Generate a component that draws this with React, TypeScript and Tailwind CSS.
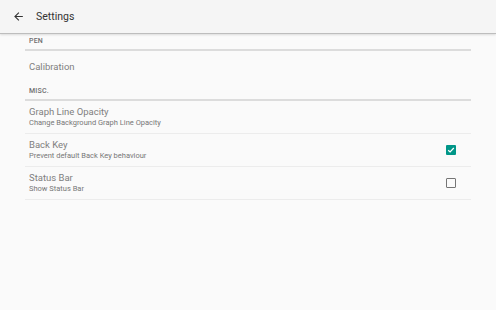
import React from "react";

function Item({ title, sub, check }: { title: string; sub?: string; check?: "on" | "off" }) {
  return (
    <div className="flex items-center h-[33px] border-b border-[#ececec] pl-[4px] pr-[15px]">
      <div className="flex-1 flex flex-col">
        <div className="text-[9.5px] leading-[12px] text-[#808080]">{title}</div>
        {sub && <div className="text-[7.5px] leading-[10px] text-[#777]">{sub}</div>}
      </div>
      {check === "on" && (
        <div className="w-[10px] h-[10px] rounded-[1px] bg-[#009688] flex items-center justify-center">
          <svg width="8" height="8" viewBox="0 0 8 8">
            <path d="M1.2 4.2 L3.1 6 L6.8 2" stroke="white" strokeWidth="1.2" fill="none" />
          </svg>
        </div>
      )}
      {check === "off" && (
        <div className="w-[10px] h-[10px] rounded-[1px] border-[1.5px] border-[#757575]" />
      )}
    </div>
  );
}

function Header({ text }: { text: string }) {
  return (
    <div className="h-[17px] flex items-center pl-[4px] border-b-2 border-[#dcdcdc] text-[7px] font-medium text-[#6e6e6e] tracking-[0.2px]">
      {text}
    </div>
  );
}

export default function App() {
  return (
    <div className="w-[496px] h-[310px] bg-[#fafafa] overflow-hidden" style={{ fontFamily: "Roboto, sans-serif" }}>
      <div className="h-[34px] bg-[#f5f5f5] border-b border-[#bdbdbd] shadow-[0_1px_2px_rgba(0,0,0,0.12)] flex items-center">
        <svg className="ml-[12px]" width="13" height="13" viewBox="0 0 24 24">
          <path d="M20 11H7.83l5.59-5.59L12 4l-8 8 8 8 1.41-1.41L7.83 13H20v-2z" fill="#333" />
        </svg>
        <div className="ml-[11px] text-[10.5px] text-[#333]">Settings</div>
      </div>
      <div className="ml-[25px] w-[446px]">
        <Header text="PEN" />
        <div className="h-[33px] flex items-center pl-[4px] text-[9.5px] text-[#808080]">Calibration</div>
        <Header text="MISC." />
        <Item title="Graph Line Opacity" sub="Change Background Graph Line Opacity" />
        <Item title="Back Key" sub="Prevent default Back Key behaviour" check="on" />
        <Item title="Status Bar" sub="Show Status Bar" check="off" />
      </div>
    </div>
  );
}
